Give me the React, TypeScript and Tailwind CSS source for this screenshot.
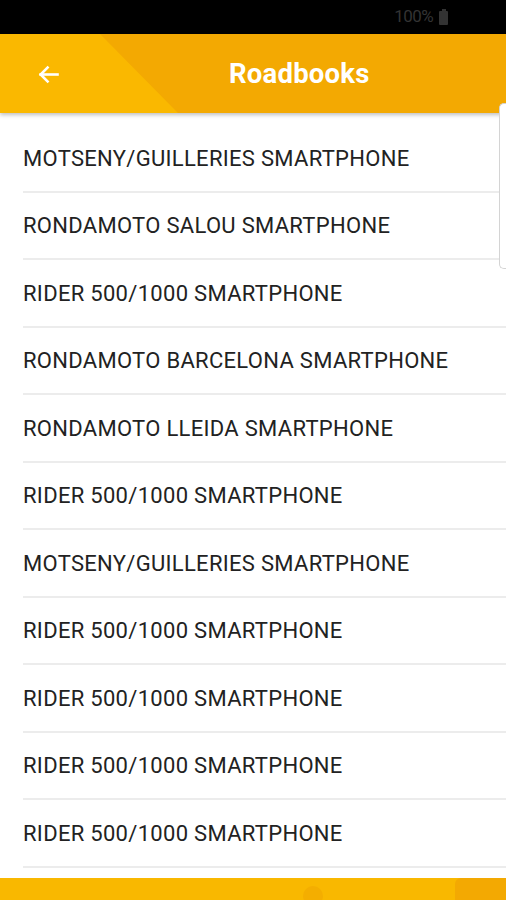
import React from "react";

const items = [
  "MOTSENY/GUILLERIES SMARTPHONE",
  "RONDAMOTO SALOU SMARTPHONE",
  "RIDER 500/1000 SMARTPHONE",
  "RONDAMOTO BARCELONA SMARTPHONE",
  "RONDAMOTO LLEIDA SMARTPHONE",
  "RIDER 500/1000 SMARTPHONE",
  "MOTSENY/GUILLERIES SMARTPHONE",
  "RIDER 500/1000 SMARTPHONE",
  "RIDER 500/1000 SMARTPHONE",
  "RIDER 500/1000 SMARTPHONE",
  "RIDER 500/1000 SMARTPHONE",
];

export default function App() {
  return (
    <div className="relative w-[506px] h-[900px] overflow-hidden bg-white flex flex-col" style={{ fontFamily: "Roboto, 'Noto Sans', sans-serif" }}>
      {/* status bar */}
      <div className="h-[34px] bg-black flex items-center justify-end pr-[58px] gap-[6px] shrink-0">
        <span className="text-[17px] text-[#333] tracking-[-0.6px]">100%</span>
        <div className="w-[9px] h-[14px] bg-[#333] rounded-[1px] relative mt-[1px]">
          <div className="absolute -top-[2px] left-[2.5px] w-[4px] h-[2px] bg-[#333]" />
        </div>
      </div>
      {/* header */}
      <div className="relative h-[79px] bg-[#F3A902] shadow-[0_2px_4px_rgba(0,0,0,0.25)] z-10 shrink-0 flex items-center">
        <div className="absolute inset-0 bg-[#FAB800] [clip-path:polygon(0_0,100px_0,178px_100%,0_100%)]" />
        <div className="relative flex items-center w-full">
          <div className="w-[96px] flex justify-center pl-[1px] pt-[1px]">
            <svg width="27" height="27" viewBox="0 0 24 24" fill="none" stroke="white" strokeWidth="2.3" strokeLinecap="square">
              <path d="M20 12H5" />
              <path d="M12 5l-7 7 7 7" strokeLinecap="butt" />
            </svg>
          </div>
          <div className="w-[133px]" />
          <span className="text-white font-bold text-[27.5px] tracking-[0.2px] pt-[1px]">Roadbooks</span>
        </div>
      </div>
      {/* list */}
      <div className="flex-1 pt-[12px] flex flex-col">
        {items.map((t, i) => (
          <div key={i} className="h-[67.5px] ml-[23px] border-b-2 border-[#ececec] flex items-center shrink-0">
            <span className="text-[22px] text-[#222] tracking-[0.3px] pt-[1px]">{t}</span>
          </div>
        ))}
      </div>
      {/* bottom bar */}
      <div className="h-[22px] bg-[#F9B800] shrink-0 flex justify-end relative">
        <div className="absolute left-[303px] top-[8px] w-[20px] h-[20px] rounded-full bg-[#F4AE00]" />
        <div className="w-[51px] bg-[#F3A902] rounded-tl-[6px]" />
      </div>
      {/* scroll indicator */}
      <div className="absolute right-0 top-[103px] w-[7px] h-[166px] bg-white border border-r-0 border-[#d4d4d4] rounded-l-[5px] z-20" />
    </div>
  );
}
